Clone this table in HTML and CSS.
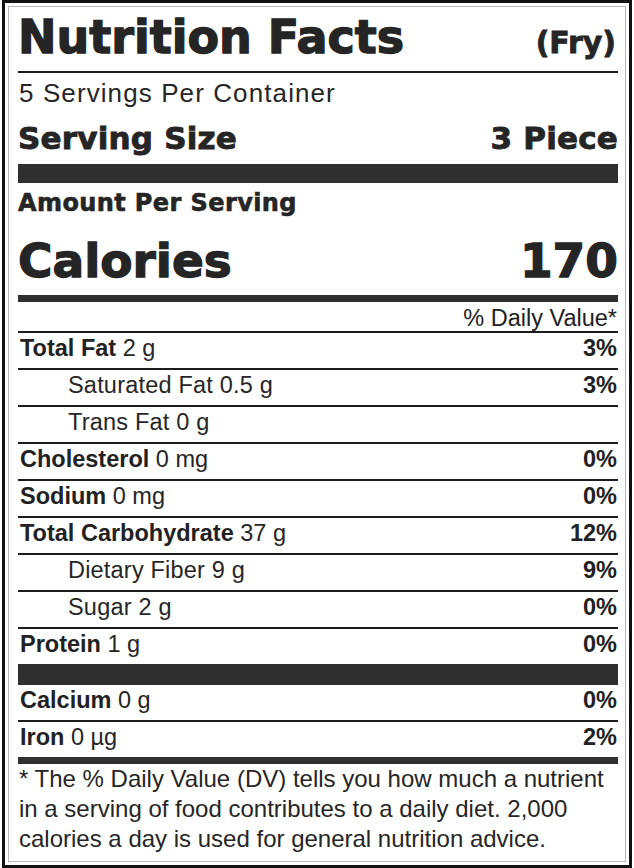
FILE: index.html
```html
<!DOCTYPE html>
<html lang="en">
<head>
<meta charset="utf-8">
<title>Nutrition Facts</title>
<link rel="stylesheet" href="styles.css">
</head>
<body>
<div class="frame">
  <div class="label">
    <div class="title-row">
      <h1 class="title">Nutrition Facts</h1>
      <span class="variant">(Fry)</span>
    </div>
    <p class="servings">5 Servings Per Container</p>
    <div class="serving-size">
      <span>Serving Size</span>
      <span>3 Piece</span>
    </div>
    <div class="bar bar-lg"></div>
    <p class="amount">Amount Per Serving</p>
    <div class="calories">
      <span>Calories</span>
      <span>170</span>
    </div>
    <div class="bar bar-sm"></div>
    <div class="dv-head">% Daily Value*</div>
    <div class="row"><span class="name"><b>Total Fat</b> 2 g</span><span class="pct">3%</span></div>
    <div class="row"><span class="name sub">Saturated Fat 0.5 g</span><span class="pct">3%</span></div>
    <div class="row"><span class="name sub">Trans Fat 0 g</span><span class="pct"></span></div>
    <div class="row"><span class="name"><b>Cholesterol</b> 0 mg</span><span class="pct">0%</span></div>
    <div class="row"><span class="name"><b>Sodium</b> 0 mg</span><span class="pct">0%</span></div>
    <div class="row"><span class="name"><b>Total Carbohydrate</b> 37 g</span><span class="pct">12%</span></div>
    <div class="row"><span class="name sub">Dietary Fiber 9 g</span><span class="pct">9%</span></div>
    <div class="row"><span class="name sub">Sugar 2 g</span><span class="pct">0%</span></div>
    <div class="row row-last"><span class="name"><b>Protein</b> 1 g</span><span class="pct">0%</span></div>
    <div class="bar bar-mid"></div>
    <div class="row"><span class="name"><b>Calcium</b> 0 g</span><span class="pct">0%</span></div>
    <div class="row row-last"><span class="name"><b>Iron</b> 0 µg</span><span class="pct">2%</span></div>
    <div class="bar bar-sm bar-flush"></div>
    <p class="footnote">* The % Daily Value (DV) tells you how much a nutrient<br>in a serving of food contributes to a daily diet. 2,000<br>calories a day is used for general nutrition advice.</p>
  </div>
</div>
</body>
</html>
```
FILE: styles.css
```css
* {
  box-sizing: border-box;
  margin: 0;
  padding: 0;
}

html,
body {
  background: #ffffff;
}

body {
  margin: 0;
  font-family: "Liberation Sans", Arial, sans-serif;
  color: #222222;
}

.frame {
  width: 630px;
  height: 868px;
  margin-left: 2px;
  border: 3px solid #111111;
  padding: 3px;
}

.label {
  height: 100%;
  border: 1px solid #b8b8b8;
  padding: 0 7px 0 9px;
  display: flex;
  flex-direction: column;
}

/* heavy display type */
.title,
.variant,
.serving-size,
.amount,
.calories {
  font-family: "DejaVu Sans", Verdana, sans-serif;
  font-weight: bold;
  color: #252525;
}

.title-row {
  display: flex;
  justify-content: space-between;
  align-items: baseline;
  padding-top: 7px;
  padding-bottom: 11px;
  border-bottom: 2px solid #1c1c1c;
}

.title {
  font-size: 46px;
  line-height: 46px;
  -webkit-text-stroke: 1.3px #252525;
}

.variant {
  font-size: 30px;
  line-height: 30px;
  padding-right: 2px;
  -webkit-text-stroke: 0.8px #252525;
}

.servings {
  margin-top: 5px;
  font-size: 26px;
  line-height: 30px;
  letter-spacing: 1.1px;
  padding-left: 1px;
  color: #262626;
}

.serving-size {
  display: flex;
  justify-content: space-between;
  padding-top: 15px;
  padding-bottom: 10px;
  font-size: 31px;
  line-height: 31px;
  letter-spacing: 0.2px;
  -webkit-text-stroke: 0.9px #252525;
}

.bar {
  background: #303030;
}

.bar-lg {
  height: 19px;
}

.bar-mid {
  height: 21px;
}

.bar-sm {
  height: 7px;
  margin-top: 11px;
}

.bar-flush {
  margin-top: 0;
}

.amount {
  margin-top: 8px;
  font-size: 24px;
  line-height: 24px;
  letter-spacing: 0.4px;
  -webkit-text-stroke: 0.6px #252525;
}

.calories {
  display: flex;
  justify-content: space-between;
  margin-top: 22px;
  font-size: 47px;
  line-height: 47px;
  -webkit-text-stroke: 1.3px #252525;
}

.dv-head {
  padding-top: 3px;
  padding-right: 1px;
  font-size: 23.5px;
  line-height: 26px;
  text-align: right;
  border-bottom: 2px solid #1c1c1c;
}

.row {
  display: flex;
  justify-content: space-between;
  align-items: baseline;
  height: 37px;
  padding: 1px 1px 0 2px;
  font-size: 23.5px;
  line-height: 28px;
  border-bottom: 2px solid #1c1c1c;
}

.row-last {
  height: 35px;
  border-bottom: none;
}

.name {
  color: #262626;
}

.name b {
  font-weight: bold;
  color: #222222;
}

.sub {
  padding-left: 48px;
  letter-spacing: 0.2px;
}

.pct {
  font-weight: bold;
}

.footnote {
  font-size: 24px;
  line-height: 30px;
  padding-left: 1px;
  color: #262626;
}
```
